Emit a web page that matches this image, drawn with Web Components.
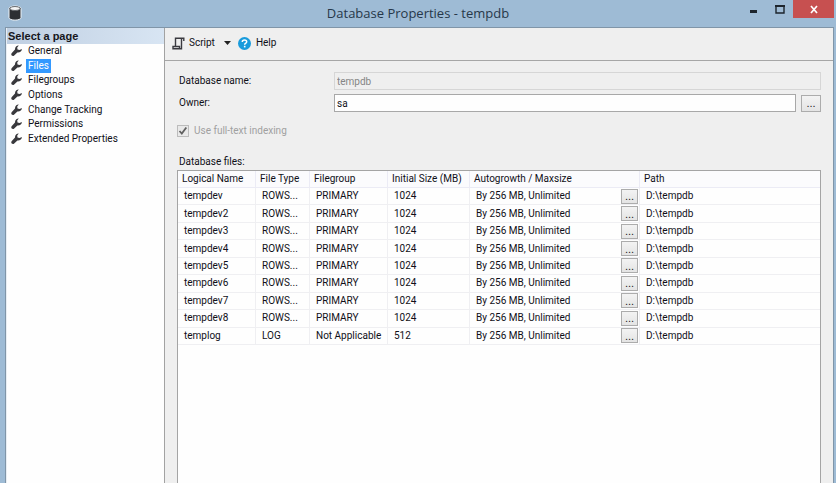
<!DOCTYPE html>
<html lang="en">
<head>
<meta charset="utf-8">
<title>Database Properties - tempdb</title>
<style>
html, body { height: 100%; margin: 0; }
body { background: #9ebbd5; overflow: hidden; }
</style>
</head>
<body>
<db-window>
  <title-bar slot="title">Database Properties - tempdb</title-bar>
  <page-nav slot="nav"></page-nav>
  <tool-bar slot="tools"></tool-bar>
  <files-page slot="page"></files-page>
</db-window>
<script>
function define(name, html, setup) {
  const template = document.createElement('template');
  template.innerHTML = html;
  customElements.define(name, class extends HTMLElement {
    constructor() {
      super();
      this.attachShadow({ mode: 'open' }).append(template.content.cloneNode(true));
    }
    connectedCallback() { if (setup) setup(this.shadowRoot, this); }
  });
}

define('db-window', `
<style>
:host { display: grid; grid-template-rows: 27px 1fr; height: 100%; font: 10px/14px Roboto, "Liberation Sans", Arial, sans-serif; color: #101018; background: #9ebbd5; }
.frame { display: grid; grid-template-columns: 158px 1fr; margin: 0 2px 0 5px; border: 1px solid #8095a8; border-bottom: 0; background: #efefef; min-height: 0; }
main { display: grid; grid-template-rows: 33px 1fr; border-left: 1px solid #a2a2a2; min-width: 0; min-height: 0; }
</style>
<slot name="title"></slot>
<div class="frame">
  <slot name="nav"></slot>
  <main><slot name="tools"></slot><slot name="page"></slot></main>
</div>`);

define('title-bar', `
<style>
:host { display: grid; grid-template-columns: 96px 1fr 94px; padding-right: 2px; color: #27384a; font: 13px/26px "Open Sans", "Noto Sans", sans-serif; }
.logo { margin: 5px 0 0 8px; }
h1 { font: inherit; margin: 0; text-align: center; }
.controls { display: grid; grid-template-columns: 26px 27px 41px; height: 18px; }
button { padding: 0; border: 0; background: none; display: grid; place-items: center; }
.close { background: #c75050; }
svg { display: block; }
</style>
<svg class="logo" width="14" height="16" viewBox="0 0 14 16" aria-hidden="true"><path d="M1 3.5C1 .2 13 .2 13 3.5v9c0 3.5-12 3.5-12 0z" fill="#2c2f33" stroke="#eef3f7"/><ellipse cx="7" cy="3.5" rx="5" ry="2" fill="#f5f5f5" stroke="#43484d" stroke-width=".7"/></svg>
<h1><slot></slot></h1>
<div class="controls">
  <button aria-label="Minimize"><svg width="10" height="18"><path d="M2 10h7v3H2z" fill="#1d252d"/></svg></button>
  <button aria-label="Maximize"><svg width="10" height="18"><path d="M1 6h8v7H1z" fill="none" stroke="#1d252d" stroke-width="1.4"/><path d="M0 5h10v2H0z" fill="#1d252d"/></svg></button>
  <button class="close" aria-label="Close"><svg width="10" height="18"><path d="M2 6l6 7M8 6l-6 7" stroke="#fff" stroke-width="1.7"/></svg></button>
</div>`);

define('page-nav', `
<style>
:host { display: block; background: #fefefe; border-left: 1px solid #e8eef4; }
h2 { margin: 0; padding: 1px 0 0 1px; height: 15px; font: bold 11px/15px "Liberation Sans", Arial, sans-serif; background: linear-gradient(90deg, #bfcfe2, #d8e5f3); color: #16161c; }
nav { display: grid; grid-auto-rows: 1fr; height: 102px; padding-left: 4px; }
a { display: flex; align-items: center; gap: 4px; color: inherit; text-decoration: none; }
span { padding: 0 2px; line-height: 14px; }
a[aria-current] span { background: #3399ff; color: #fff; }
</style>
<h2>Select a page</h2><nav aria-label="Pages"></nav>`, root => {
  root.querySelector('nav').innerHTML = ['General', 'Files', 'Filegroups', 'Options', 'Change Tracking', 'Permissions', 'Extended Properties']
    .map(label => `<a href="#" ${label === 'Files' ? 'aria-current="page"' : ''}><svg width="11" height="12" viewBox="0 0 11 12" aria-hidden="true"><path d="M7.800.4C5.600.3 3.800 2 4 4.600L.8 7.900C-.8 9.800 1.500 12 3.200 10.500L6.400 7.400C8.800 7.700 10.900 6.200 10.900 4L8.600 5.100 6.500 4.600 6.200 2.600z" fill="#38383c"/></svg><span>${label}</span></a>`).join('');
});

define('tool-bar', `
<style>
:host { display: flex; align-items: center; padding: 0 7px 2px; border-bottom: 1px solid #a6a6a6; box-sizing: border-box; }
button { display: flex; align-items: center; padding: 0; border: 0; background: none; color: inherit; font: inherit; }
.script { gap: 4px; } .arrow { margin: 0 7px 0 9px; } .help { gap: 5px; }
</style>
<button class="script"><svg width="13" height="13" viewBox="0 0 13 13" fill="none" stroke="#3a3a40" stroke-width="1.400" aria-hidden="true"><path d="M3.500 9V1.200h8.300V4M9.500 1.500v10.300H1V9.500h6.500V11"/></svg>Script</button>
<button class="arrow" aria-label="Script options"><svg width="7" height="4"><path d="M0 0h7L3.500 4z" fill="#222"/></svg></button>
<button class="help"><svg width="13" height="13" viewBox="0 0 13 13" aria-hidden="true"><circle cx="6.500" cy="6.500" r="6.500" fill="#199bdc"/><path d="M4.300 4.900q0-2 2.200-2t2.200 1.800q0 1-1.200 1.600-.8.500-.8 1.400" fill="none" stroke="#fff" stroke-width="1.500"/><path d="M5.900 8.800h1.600v1.600H5.900z" fill="#fff"/></svg>Help</button>`);

define('ellipsis-button', `
<style>
:host { display: block; }
button { display: block; box-sizing: border-box; width: 100%; height: 100%; padding: 0; border: 1px solid #acacac; background: linear-gradient(#f3f3f3, #e4e4e4); color: #222; font: 11px/12px "Liberation Sans", Arial, sans-serif; }
</style>
<button aria-label="Browse">...</button>`);

define('files-page', `
<style>
:host { display: flex; flex-direction: column; padding: 11px 12px 0; min-height: 0; }
.fields { display: grid; grid-template-columns: 150px 1fr 20px; grid-template-rows: 18px 18px; row-gap: 4px; column-gap: 5px; align-items: center; padding-left: 2px; }
input[type=text] { box-sizing: border-box; width: 100%; min-width: 0; height: 18px; margin: 0; padding: 0 2px; border: 1px solid #a8a8a8; border-radius: 0; font: inherit; color: #101018; background: #fefefe; }
input[type=text]:disabled { grid-column: 2 / 4; border-color: #d6d6d6; background: #efefef; color: #858585; }
ellipsis-button { height: 17px; }
.check { display: flex; align-items: center; gap: 5px; margin-top: 12px; height: 14px; color: #a0a0a0; }
.check input { appearance: none; width: 12px; height: 12px; margin: 0; border: 1px solid #bcbcbc; background: #e9e9e9 url('data:image/svg+xml,<svg xmlns="http://www.w3.org/2000/svg" viewBox="0 0 10 10"><path d="M1.500 5l2.300 2.500 4.500-6" fill="none" stroke="%23606060" stroke-width="1.800"/></svg>') center / 10px no-repeat; }
h3 { margin: 17px 0 1px 2px; font: inherit; }
file-grid { flex: 1; }
</style>
<div class="fields">
  <label for="name">Database name:</label><input id="name" type="text" value="tempdb" disabled>
  <label for="owner">Owner:</label><input id="owner" type="text" value="sa"><ellipsis-button></ellipsis-button>
</div>
<label class="check"><input type="checkbox" checked disabled>Use full-text indexing</label>
<h3>Database files:</h3>
<file-grid></file-grid>`);

define('file-grid', `
<style>
:host { display: block; border: 1px solid #a4a4a4; border-bottom: 0; background: #fefefe; min-height: 0; }
table { width: 100%; height: 174px; table-layout: fixed; border-collapse: separate; border-spacing: 0; }
th, td { padding: 0 0 0 6px; border: solid #efeff2; border-width: 0 1px 1px 0; text-align: left; font-weight: normal; white-space: nowrap; }
th { height: 16px; padding-left: 4px; border-color: #ebebf5; background: #fbfbfd; }
:is(th, td):last-child { border-right: 0; }
.browse { display: flex; justify-content: space-between; align-items: center; }
ellipsis-button { width: 17px; height: 15px; margin-right: 1px; }
</style>
<table>
  <colgroup><col style="width:78px"><col style="width:54px"><col style="width:78px"><col style="width:82px"><col style="width:170px"><col></colgroup>
  <thead><tr><th>Logical Name</th><th>File Type</th><th>Filegroup</th><th>Initial Size (MB)</th><th>Autogrowth / Maxsize</th><th>Path</th></tr></thead>
  <tbody></tbody>
</table>`, root => {
  const rows = ['', 2, 3, 4, 5, 6, 7, 8].map(n => ['tempdev' + n, 'ROWS...', 'PRIMARY', '1024']);
  rows.push(['templog', 'LOG', 'Not Applicable', '512']);
  root.querySelector('tbody').innerHTML = rows.map(r => `<tr>${r.map(c => `<td>${c}</td>`).join('')}<td><div class="browse">By 256 MB, Unlimited<ellipsis-button></ellipsis-button></div></td><td>D:\\tempdb</td></tr>`).join('');
});
</script>
</body>
</html>
